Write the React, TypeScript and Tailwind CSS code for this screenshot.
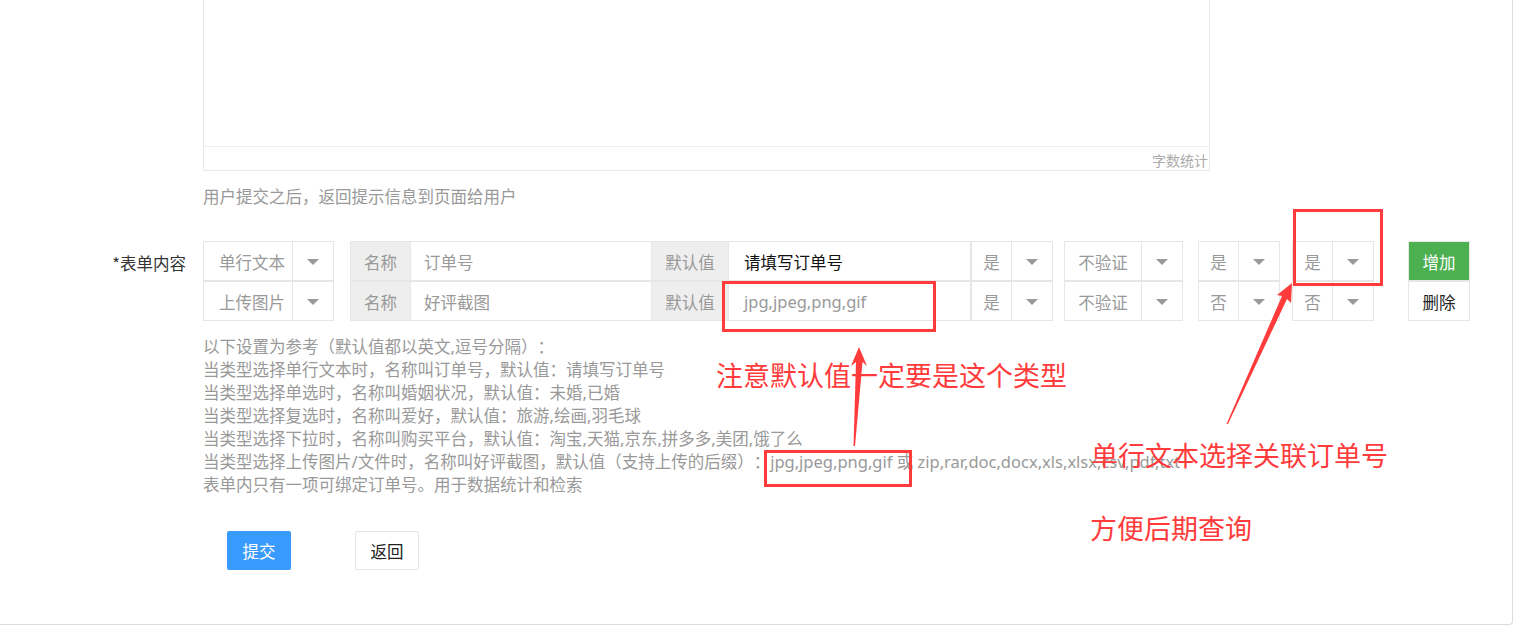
import React from "react";

function T({ s }: { s: string }) {
  const parts = s.match(/[\x00-\x7f]+|[^\x00-\x7f]+/g) || [];
  return (
    <>
      {parts.map((p, i) =>
        /^[\x00-\x7f]/.test(p) ? (
          <span key={i} className="font-['Noto_Sans',sans-serif]">
            {p}
          </span>
        ) : (
          <span key={i}>{p}</span>
        )
      )}
    </>
  );
}

const Tri = () => (
  <svg width="12" height="7" viewBox="0 0 12 7" className="mt-[3px]">
    <polygon points="0,0 12,0 6,6" fill="#9a9a9a" />
  </svg>
);

function Select({
  w,
  text,
  center,
  pl,
}: {
  w: string;
  text: string;
  center?: boolean;
  pl?: string;
}) {
  return (
    <div className={`flex h-[40px] border border-[#e6e6e6] bg-white ${w}`}>
      <div
        className={`flex-1 flex items-center pt-[3px] text-[#999] ${
          center ? "justify-center" : pl
        }`}
      >
        {text}
      </div>
      <div className="w-[41px] border-l border-[#e6e6e6] flex items-center justify-center">
        <Tri />
      </div>
    </div>
  );
}

function Row({
  type,
  name,
  def,
  defFilled,
  req,
  verify,
  a,
  b,
  btn,
}: {
  type: string;
  name: string;
  def: string;
  defFilled?: boolean;
  req: string;
  verify: string;
  a: string;
  b: string;
  btn: "add" | "del";
}) {
  return (
    <div className="flex h-[40px]">
      <Select w="w-[131px]" text={type} pl="pl-[15px]" />
      <div className="ml-[16px] flex w-[621px] h-[40px] border border-[#e6e6e6]">
        <div className="w-[59px] bg-[#eee] flex items-center justify-center pt-[3px] text-[#999]">
          名称
        </div>
        <div className="w-[241px] border-l border-[#e6e6e6] bg-white flex items-center pt-[3px] pl-[13px] text-[#999]">
          {name}
        </div>
        <div className="w-[77px] border-l border-[#e6e6e6] bg-[#eee] flex items-center justify-center pt-[3px] text-[#999]">
          默认值
        </div>
        <div
          className={`flex-1 border-l border-[#e6e6e6] bg-white flex items-center pt-[2px] pl-[15px] ${
            defFilled ? "text-[#111]" : "text-[#999]"
          }`}
        >
          <T s={def} />
        </div>
      </div>
      <Select w="w-[82px]" text={req} center />
      <div className="ml-[11px]">
        <Select w="w-[119px]" text={verify} center />
      </div>
      <div className="ml-[15px]">
        <Select w="w-[82px]" text={a} center />
      </div>
      <div className="ml-[12px]">
        <Select w="w-[82px]" text={b} center />
      </div>
      <div className="ml-[34px]">
        {btn === "add" ? (
          <div className="w-[62px] h-[40px] border border-[#e6e6e6] bg-[#4caf50] text-white flex items-center justify-center pt-[2px]">
            增加
          </div>
        ) : (
          <div className="w-[62px] h-[40px] border border-[#e6e6e6] bg-white text-[#222] flex items-center justify-center pt-[2px]">
            删除
          </div>
        )}
      </div>
    </div>
  );
}

const notes = [
  "以下设置为参考（默认值都以英文,逗号分隔）：",
  "当类型选择单行文本时，名称叫订单号，默认值：请填写订单号",
  "当类型选择单选时，名称叫婚姻状况，默认值：未婚,已婚",
  "当类型选择复选时，名称叫爱好，默认值：旅游,绘画,羽毛球",
  "当类型选择下拉时，名称叫购买平台，默认值：淘宝,天猫,京东,拼多多,美团,饿了么",
  "当类型选择上传图片/文件时，名称叫好评截图，默认值（支持上传的后缀）：jpg,jpeg,png,gif 或 zip,rar,doc,docx,xls,xlsx,csv,pdf,txt",
  "表单内只有一项可绑定订单号。用于数据统计和检索",
];

export default function App() {
  return (
    <div className="relative w-[1529px] h-[638px] overflow-hidden bg-white font-['Noto_Sans_CJK_SC',sans-serif] text-[16.5px] [text-spacing-trim:space-all]">
      <div className="w-[1513px] h-[625px] border-r border-b border-[#dcdcdc] rounded-br-[4px] flex flex-col">
        <div className="pl-[203px]">
          <div className="w-[1007px] h-[171px] border-x border-b border-[#e8e8e8] flex flex-col">
            <div className="flex-1" />
            <div className="h-[24px] border-t border-[#eeeeee] flex items-center justify-end pr-[1px] pt-[2px] text-[14px] leading-none text-[#aaa]">
              字数统计
            </div>
          </div>
          <div className="mt-[14px] leading-[22px] text-[#999]">
            用户提交之后，返回提示信息到页面给用户
          </div>
        </div>

        <div className="flex mt-[34px]">
          <div className="w-[203px] pr-[17px] pt-[2px] text-right leading-[40px] text-[#333]">
            *表单内容
          </div>
          <div className="flex flex-col">
            <Row
              type="单行文本"
              name="订单号"
              def="请填写订单号"
              defFilled
              req="是"
              verify="不验证"
              a="是"
              b="是"
              btn="add"
            />
            <Row
              type="上传图片"
              name="好评截图"
              def="jpg,jpeg,png,gif"
              req="是"
              verify="不验证"
              a="否"
              b="否"
              btn="del"
            />
            <div className="mt-[14px] text-[#999] leading-[23px] whitespace-nowrap">
              {notes.map((n) => (
                <div key={n}>
                  <T s={n} />
                </div>
              ))}
            </div>
            <div className="flex mt-[35px] ml-[24px]">
              <div className="w-[64px] h-[39px] rounded-[2px] bg-[#3a9bff] text-white flex items-center justify-center pt-[2px]">
                提交
              </div>
              <div className="ml-[64px] w-[64px] h-[39px] rounded-[2px] border border-[#e6e6e6] bg-white text-[#222] flex items-center justify-center pt-[2px]">
                返回
              </div>
            </div>
          </div>
        </div>
      </div>

      <svg
        className="absolute left-0 top-0 pointer-events-none"
        width="1529"
        height="638"
        viewBox="0 0 1529 638"
      >
        <g fill="none" stroke="#ff3b3b" strokeWidth="3">
          <rect x="723.5" y="282.5" width="211" height="48" />
          <rect x="765.5" y="451.5" width="145" height="34" />
          <rect x="1294.5" y="210.5" width="87" height="74" />
        </g>
        <g fill="#ff3b3b">
          <polygon points="859,347 867,366 862.5,362 855,446 853.5,446 856,362 851,366" />
          <polygon points="1292,283 1291,303 1287,299 1228,424 1226.5,424 1282,296 1277,295" />
        </g>
      </svg>

      <div className="absolute left-[716px] top-[360px] text-[27px] leading-[30px] text-[#ff3b3b] whitespace-nowrap">
        注意默认值一定要是这个类型
      </div>
      <div className="absolute left-[1091px] top-[440px] text-[27px] leading-[30px] text-[#ff3b3b] whitespace-nowrap">
        单行文本选择关联订单号
      </div>
      <div className="absolute left-[1090px] top-[513px] text-[27px] leading-[30px] text-[#ff3b3b] whitespace-nowrap">
        方便后期查询
      </div>
    </div>
  );
}
